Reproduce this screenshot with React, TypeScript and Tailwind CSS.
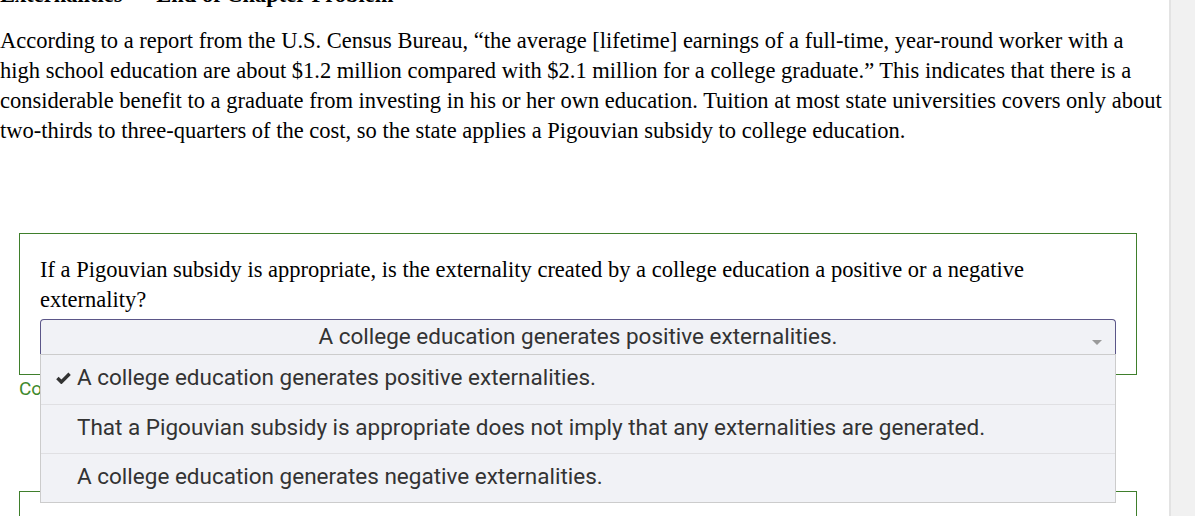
const options = [
  'A college education generates positive externalities.',
  'That a Pigouvian subsidy is appropriate does not imply that any externalities are generated.',
  'A college education generates negative externalities.',
]

function Check() {
  return (
    <svg className="absolute left-[15px] top-[17px]" width="15" height="12" viewBox="0 0 15 12">
      <path d="M1.4 6 L5.4 10 L13.6 1.8" fill="none" stroke="#333" strokeWidth="3.4" strokeLinecap="butt" strokeLinejoin="miter" />
    </svg>
  )
}

export default function App() {
  return (
    <div className="flex h-[516px] w-[1195px] overflow-hidden bg-white">
      <main className="relative w-[1169px] shrink-0 font-['Liberation_Serif',serif] text-[22.5px] leading-[30px] text-black">
        <h2 className="-mt-[20px] mb-[16px] font-bold">Externalities — End of Chapter Problem</h2>
        <p className="w-[1162px]">
          According to a report from the U.S. Census Bureau, “the average [lifetime] earnings of a full-time, year-round worker with a high school education are about $1.2 million compared with $2.1 million for a college graduate.” This indicates that there is a considerable benefit to a graduate from investing in his or her own education. Tuition at most state universities covers only about two-thirds to three-quarters of the cost, so the state applies a Pigouvian subsidy to college education.
        </p>

        <div className="ml-[19px] mt-[87px] w-[1118px] border border-[#3f7f2c] px-[20px] pb-[19px] pt-[21px]">
          <p>If a Pigouvian subsidy is appropriate, is the externality created by a college education a positive or a negative externality?</p>
          <div className="relative mt-[4px]">
            <div className="flex h-[36px] w-[1076px] items-center justify-center rounded-t-[4px] border border-b-0 border-[#5b5688] bg-[#f1f2f6] pb-[3px] font-['Roboto',sans-serif] text-[22.5px] text-[#333]">
              <span>A college education generates positive externalities.</span>
              <span className="absolute right-[14px] top-[21px] h-0 w-0 border-x-[5px] border-t-[5px] border-x-transparent border-t-[#9a9a9a]" />
            </div>
            <ul className="absolute left-0 top-[35px] z-10 w-[1076px] border border-[#cccccc] bg-[#f1f2f6] font-['Roboto',sans-serif] text-[22.5px] leading-[26px] text-[#333]">
              {options.map((o, i) => (
                <li key={o} className={`relative flex h-[49px] items-center pb-[5px] pl-[36px] ${i > 0 ? 'border-t border-[#e0e0e3]' : ''}`}>
                  {i === 0 && <Check />}
                  {o}
                </li>
              ))}
            </ul>
          </div>
        </div>
        <div className="ml-[19px] mt-[3px] font-['Roboto',sans-serif] text-[19px] leading-[22px] text-[#3f8a2e]">Correct</div>

        <div className="ml-[19px] mt-[91px] h-[40px] w-[1118px] border border-[#3f7f2c]" />
      </main>
      <aside className="h-full flex-1 border-l-2 border-[#e3e3e3] bg-[#f1f1f1]" />
    </div>
  )
}
